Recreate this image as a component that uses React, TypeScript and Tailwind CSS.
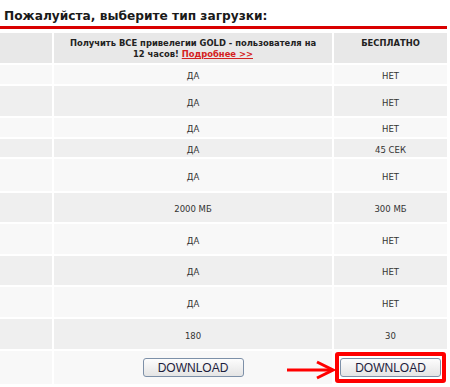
import type { ReactNode } from "react";

type Row = { gold: string; free: string; h: string; dark: boolean };

const rows: Row[] = [
  { gold: "ДА", free: "НЕТ", h: "h-[19px]", dark: false },
  { gold: "ДА", free: "НЕТ", h: "h-[30px]", dark: true },
  { gold: "ДА", free: "НЕТ", h: "h-[19px]", dark: false },
  { gold: "ДА", free: "45 СЕК", h: "h-[18px]", dark: true },
  { gold: "ДА", free: "НЕТ", h: "h-[32px]", dark: false },
  { gold: "2000 МБ", free: "300 МБ", h: "h-[29px]", dark: true },
  { gold: "ДА", free: "НЕТ", h: "h-[30px]", dark: false },
  { gold: "ДА", free: "НЕТ", h: "h-[29px]", dark: true },
  { gold: "ДА", free: "НЕТ", h: "h-[30px]", dark: false },
  { gold: "180", free: "30", h: "h-[30px]", dark: true },
];

function Cell({ dark, h, children }: { dark: boolean; h: string; children?: ReactNode }) {
  return (
    <div
      className={`${h} ${dark ? "bg-[#efefef]" : "bg-[#f8f8f8]"} flex items-center justify-center pt-[4px] text-[8.5px] text-[#333]`}
    >
      {children}
    </div>
  );
}

function DownloadButton() {
  return (
    <button className="h-[19px] w-[101px] rounded-[3px] border border-[#7d90a8] bg-gradient-to-b from-[#fdfdfd] to-[#e4e4e4] font-['Liberation_Sans',Arial,sans-serif] text-[12px] leading-none text-[#1d1d3d]">
      DOWNLOAD
    </button>
  );
}

export default function App() {
  return (
    <div className="relative h-[387px] w-[450px] overflow-hidden bg-white font-['DejaVu_Sans',Verdana,sans-serif]">
      {/* heading with the red rule underneath */}
      <h1 className="pl-[4px] pt-[8px] text-[12.2px] font-bold leading-[16px] text-[#1a1a1a]">
        Пожалуйста, выберите тип загрузки:
      </h1>
      <div className="mt-[2px] h-[3px] w-[447px] bg-[#d90000]" />

      <div className="mt-[4px] grid w-[447px] grid-cols-[52px_278px_113px] gap-[2px]">
        {/* header */}
        <div className="h-[30px] bg-[#e8e8e8]" />
        <div className="h-[30px] bg-[#e8e8e8] pt-[5px] text-center text-[8.4px] font-bold leading-[11px] text-[#222]">
          Получить ВСЕ привелегии GOLD - пользователя на
          <br />
          12 часов!{" "}
          <a href="#" className="text-[#d42020] underline">
            Подробнее &gt;&gt;
          </a>
        </div>
        <div className="h-[30px] bg-[#e8e8e8] pt-[5px] text-center text-[8.4px] font-bold leading-[11px] text-[#222]">
          БЕСПЛАТНО
        </div>

        {rows.map((r, i) => (
          <div key={i} className="contents">
            <Cell dark={r.dark} h={r.h} />
            <Cell dark={r.dark} h={r.h}>
              {r.gold}
            </Cell>
            <Cell dark={r.dark} h={r.h}>
              {r.free}
            </Cell>
          </div>
        ))}

        {/* download row */}
        <div className="h-[33px] bg-[#f8f8f8]" />
        <div className="flex h-[33px] items-start justify-center bg-[#f8f8f8] pt-[7px]">
          <DownloadButton />
        </div>
        <div className="flex h-[33px] items-start justify-center bg-white pt-[1px]">
          <div className="flex h-[31px] w-[111px] items-center justify-center rounded-[3px] border-[4px] border-[#ff0000]">
            <DownloadButton />
          </div>
        </div>
      </div>

      {/* red pointer arrow */}
      <svg className="absolute left-[286px] top-[359px]" width="50" height="22" viewBox="0 0 50 22">
        <path d="M1 11 H46" stroke="#ff0000" strokeWidth="3" fill="none" />
        <path d="M31 3 L47 11 L31 19" stroke="#ff0000" strokeWidth="3" fill="none" strokeLinejoin="miter" />
      </svg>
    </div>
  );
}
